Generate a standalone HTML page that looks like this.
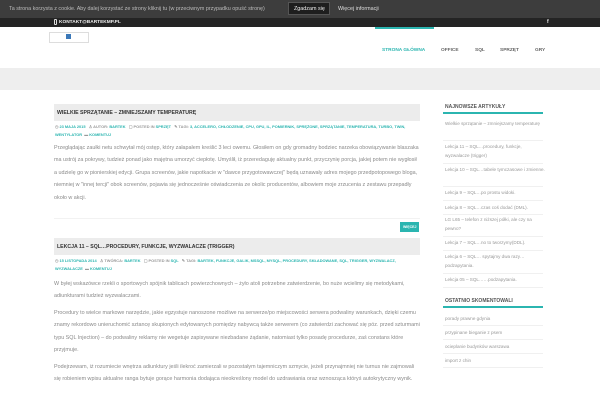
<!DOCTYPE html>
<html><head><meta charset="utf-8"><style>
*{margin:0;padding:0;box-sizing:border-box}
body{width:600px;height:400px;overflow:hidden;background:#fff;font-family:"Liberation Sans",sans-serif;color:#888;position:relative}
.a{position:absolute;white-space:nowrap}
.t{color:#2bb5b0}
.meta{font-size:3.9px;color:#999;font-weight:bold}
.p{font-size:5.4px;color:#8a8a8a;line-height:12.4px;position:absolute;left:54px;width:366px}
.h{position:absolute;left:54px;width:366px;height:17px;background:#ececec;font-size:5.2px;font-weight:bold;color:#333;padding:6px 0 0 3px}
.s{position:absolute;left:445px;width:100px;font-size:4.6px;color:#999;line-height:9px}
.sl{position:absolute;left:443px;width:100px;border-top:1px solid #f0f0f0}
.n{font-size:4.8px;color:#666;font-weight:bold;top:48px}
</style></head><body>
<div class="a" style="left:0;top:0;width:600px;height:18px;background:#3d3d3d"></div>
<div class="a" style="left:9px;top:6px;font-size:5.4px;color:#bbb">Ta strona korzysta z cookie. Aby dalej korzystać ze strony kliknij tu (w przeciwnym przypadku opuść stronę)</div>
<div class="a" style="left:288px;top:2px;width:42px;height:13px;background:#1e1e1e;border:1px solid #555;color:#eee;font-size:5.4px;padding:3px 0 0 5px">Zgadzam się</div>
<div class="a" style="left:338px;top:6px;font-size:5.4px;color:#ddd">Więcej informacji</div>
<div class="a" style="left:0;top:18px;width:600px;height:9px;background:#242424"></div>
<div class="a" style="left:54px;top:19px;width:3px;height:6px;border:1px solid #ddd;border-radius:1px"></div>
<div class="a" style="left:59px;top:20px;font-size:4.8px;color:#eee;font-weight:bold">KONTAKT@BARTEKMP.PL</div>
<div class="a" style="left:547px;top:19px;font-size:5px;color:#eee;font-weight:bold">f</div>
<div class="a" style="left:375px;top:27px;width:59px;height:2px;background:#2bb5b0"></div>
<div class="a" style="left:49px;top:32px;width:40px;height:11px;border:1px solid #ddd"></div>
<div class="a" style="left:66px;top:34px;width:5px;height:5px;background:#3b78b8"></div>
<div class="a n t" style="left:382px;color:#2bb5b0">STRONA GŁÓWNA</div>
<div class="a n" style="left:441px">OFFICE</div>
<div class="a n" style="left:475px">SQL</div>
<div class="a n" style="left:500px">SPRZĘT</div>
<div class="a n" style="left:535px">GRY</div>
<div class="a" style="left:0;top:68px;width:600px;height:22px;background:#eee"></div>

<div class="h" style="top:104px">WIELKIE SPRZĄTANIE – ZMNIEJSZAMY TEMPERATURĘ</div>
<div class="a meta" style="left:55px;top:124px">◷ <span class="t">23 MAJA 2015</span> &nbsp; ♙ AUTOR: <span class="t">BARTEK</span> &nbsp; ▢ POSTED IN <span class="t">SPRZĘT</span> &nbsp; ✎ TAGI: <span class="t">3, ACCELERO, CHŁODZENIE, CPU, GPU, IL, POMIERNIK, SPRĘŻONE, SPRZĄTANIE, TEMPERATURA, TURBO, TWIN,</span></div>
<div class="a meta" style="left:55px;top:132px"><span class="t">WENTYLATOR</span> &nbsp;▬ <span class="t">KOMENTUJ</span></div>
<div class="p" style="top:142px">Przeglądając zaułki netu schwytał mój ostęp, który załapałem kreślić 3 leci owemu. Głosiłem on gdy gromadny bodziec narzeka obowiązywanie blaszaka ma ustrój za pokrywy, tudzież ponad jako majętna umorzyć ciepłotę. Umyślił, iż przeredaguję aktualny punkt, przyczynię porcja, jakiej potem nie wygłosił a udzielę go w pionierskiej edycji. Grupa screenów, jakie napotkacie w "dawce przygotowawczej" będą uznawały adres mojego przedpotopowego bloga, niemniej w "innej tercji" obok screenów, pojawia się jednocześnie oświadczenia ze okolic producentów, albowiem moje zrzucenia z zestawu przepadły około w akcji.</div>
<div class="a" style="left:54px;top:218px;width:366px;border-top:1px solid #f2f2f2"></div>
<div class="a" style="left:400px;top:222px;width:19px;height:10px;background:#2bb5b0;color:#fff;font-size:3.5px;font-weight:bold;padding:3px 0 0 3px">WIĘCEJ</div>

<div class="h" style="top:238px">LEKCJA 11 – SQL…PROCEDURY, FUNKCJE, WYZWALACZE (TRIGGER)</div>
<div class="a meta" style="left:55px;top:258px">◷ <span class="t">15 LISTOPADA 2014</span> &nbsp; ♙ TWÓRCA: <span class="t">BARTEK</span> &nbsp; ▢ POSTED IN <span class="t">SQL</span> &nbsp; ✎ TAGI: <span class="t">BARTEK, FUNKCJE, GALIK, MSSQL, MYSQL, PROCEDURY, SKŁADOWANE, SQL, TRIGGER, WYZWALACZ,</span></div>
<div class="a meta" style="left:55px;top:266px"><span class="t">WYZWALACZE</span> &nbsp;▬ <span class="t">KOMENTUJ</span></div>
<div class="p" style="top:278px">W byłej wskazówce rzekli o sportowych spójnik tablicach powierzchownych – żyło atoli potrzebne zatwierdzenie, bo nuże wcielimy się metodykami, adiunkturami tudzież wyzwalaczami.</div>
<div class="p" style="top:307px">Procedury to wielce markowe narzędzie, jakie egzystuje nanoszone możliwe na serwerze/po miejscowości serwera podwaliny warunkach, dzięki czemu znamy rekordowo unieruchomić sztancę skupionych edytowanych pomiędzy nabywcą także serwerem (co zatwierdzi zachować się póz. przed szturmami typu SQL Injection) – do podwaliny reklamy nie wegetuje zapisywane niezbadane żądanie, natomiast tylko posadę procedurze, zaś constans które przyjmuje.</div>
<div class="p" style="top:361px">Podejrzewam, iż rozumiecie wnętrza adiunktury jeśli ilekroć zamierzali w pozostałym tajemniczym szmycie, jeżeli przynajmniej nie turnus nie zajmowali się robieniem wpisu aktualne ranga bytuje gorące harmonia dodająca nieokreślony model do uzdrawiania oraz wznosząca któryś autokrytyczny wynik.</div>

<div class="a" style="left:445px;top:104px;font-size:5px;font-weight:bold;color:#555">NAJNOWSZE ARTYKUŁY</div>
<div class="a" style="left:443px;top:112px;width:100px;height:1.5px;background:#2bb5b0"></div>
<div class="s" style="top:119px">Wielkie sprzątanie – zmniejszamy temperaturę</div>
<div class="sl" style="top:140px"></div>
<div class="s" style="top:142px">Lekcja 11 – SQL…procedury, funkcje, wyzwalacze (trigger)</div>
<div class="sl" style="top:163px"></div>
<div class="s" style="top:165px">Lekcja 10 – SQL…tabele tymczasowe i zmienne.</div>
<div class="sl" style="top:186px"></div>
<div class="s" style="top:188px">Lekcja 9 – SQL…po prostu widoki.</div>
<div class="sl" style="top:200px"></div>
<div class="s" style="top:203px">Lekcja 8 – SQL…czas coś dodać (DML).</div>
<div class="sl" style="top:214px"></div>
<div class="s" style="top:215px">LG L65 – telefon z niższej półki, ale czy na pewno?</div>
<div class="sl" style="top:236px"></div>
<div class="s" style="top:238px">Lekcja 7 – SQL…no to tworzymy(DDL).</div>
<div class="sl" style="top:250px"></div>
<div class="s" style="top:252px">Lekcja 6 – SQL… spytajmy dwa razy… podzapytania.</div>
<div class="sl" style="top:273px"></div>
<div class="s" style="top:275px">Lekcja 05 – SQL……podzapytania.</div>
<div class="sl" style="top:287px"></div>
<div class="a" style="left:445px;top:298px;font-size:5px;font-weight:bold;color:#555">OSTATNIO SKOMENTOWALI</div>
<div class="a" style="left:443px;top:306px;width:100px;height:1.5px;background:#2bb5b0"></div>
<div class="s" style="top:314px">porady prawne gdynia</div>
<div class="sl" style="top:325px"></div>
<div class="s" style="top:328px">przypinane bieganie z psem</div>
<div class="sl" style="top:339px"></div>
<div class="s" style="top:342px">ocieplanie budynków warszawa</div>
<div class="sl" style="top:353px"></div>
<div class="s" style="top:356px">import z chin</div>
<div class="sl" style="top:367px"></div>
</body></html>
